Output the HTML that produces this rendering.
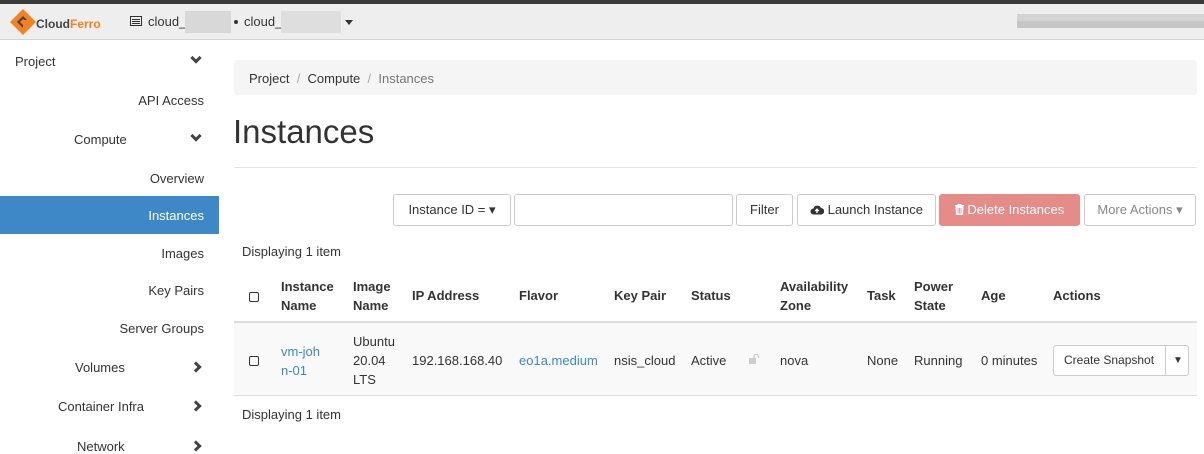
<!DOCTYPE html>
<html><head><meta charset="utf-8"><style>
*{box-sizing:border-box;margin:0;padding:0}
body{width:1204px;height:453px;overflow:hidden;background:#fff;font-family:"Liberation Sans",sans-serif;font-size:13px;color:#333;position:relative}
.a{position:absolute;white-space:nowrap}
.top{position:absolute;left:0;top:0;width:1204px;height:4px;background:#3a3a3a}
.hdr{position:absolute;left:0;top:4px;width:1204px;height:36px;background:#eee;border-bottom:1px solid #d4d4d4}
.side{position:absolute;right:1000px;text-align:right;font-size:13px;color:#333}
.chev{position:absolute;left:192px;width:8px;height:8px;border-right:3px solid #444;border-bottom:3px solid #444}
.btn{position:absolute;top:194px;height:32px;border:1px solid #ccc;border-radius:3px;background:#fff;font-size:13px;line-height:30px;text-align:center;color:#333}
.th{position:absolute;font-weight:bold;line-height:19px}
.td{position:absolute;line-height:19px}
.cb{position:absolute;width:10px;height:10px;border:1px solid #333;border-radius:2px}
.blur{position:absolute;background:#ccc}
</style></head><body>
<div class="top"></div>
<div class="hdr"></div>
<svg class="a" style="left:9px;top:8px" width="28" height="28" viewBox="0 0 28 28"><path d="M14 1 L27 14 L14 27 L1 14Z" fill="#f58220"/><path d="M8 14 L14 8 L18 12 L15 12 L14 11 L11 14 L14 17 L14 20 Z" fill="#444"/></svg>
<div class="a" style="left:36px;top:17px;font-size:12px;font-weight:bold;color:#444">Cloud<span style="color:#f58220">Ferro</span></div>
<svg class="a" style="left:130px;top:16px" width="12" height="10"><rect x="0.5" y="0.5" width="11" height="9" fill="none" stroke="#333"/><rect x="2" y="3" width="8" height="1" fill="#333"/><rect x="2" y="5" width="8" height="1" fill="#333"/><rect x="2" y="7" width="8" height="1" fill="#333"/></svg>
<div class="a" style="left:148px;top:14px;font-size:13px">cloud_</div>
<div class="blur" style="left:185px;top:11px;width:46px;height:22px;background:#d8d8d8"></div>
<div class="a" style="left:234px;top:20px;width:4px;height:4px;border-radius:2px;background:#333"></div>
<div class="a" style="left:244px;top:14px;font-size:13px">cloud_</div>
<div class="blur" style="left:281px;top:11px;width:60px;height:22px;background:#dedede"></div>
<div class="a" style="left:345px;top:20px;border-left:4px solid transparent;border-right:4px solid transparent;border-top:5px solid #333"></div>
<div class="blur" style="left:1017px;top:14px;width:187px;height:7px;background:#d4d4d4"></div>
<div class="blur" style="left:1017px;top:21px;width:187px;height:7px;background:#c6c6c6"></div>

<div class="a" style="left:15px;top:54px">Project</div><div class="chev" style="top:54px;transform:rotate(45deg)"></div>
<div class="side" style="top:93px">API Access</div>
<div class="a" style="left:74px;top:132px">Compute</div><div class="chev" style="top:132px;transform:rotate(45deg)"></div>
<div class="side" style="top:171px">Overview</div>
<div class="a" style="left:0;top:196px;width:219px;height:38px;background:#3f88c8"></div>
<div class="side" style="top:208px;color:#fff">Instances</div>
<div class="side" style="top:246px">Images</div>
<div class="side" style="top:283px">Key Pairs</div>
<div class="side" style="top:321px">Server Groups</div>
<div class="a" style="left:75px;top:360px">Volumes</div><div class="chev" style="top:363px;left:192px;transform:rotate(-45deg)"></div>
<div class="a" style="left:58px;top:399px">Container Infra</div><div class="chev" style="top:402px;left:192px;transform:rotate(-45deg)"></div>
<div class="a" style="left:77px;top:439px">Network</div><div class="chev" style="top:442px;left:192px;transform:rotate(-45deg)"></div>

<div class="a" style="left:234px;top:60px;width:963px;height:35px;background:#f5f5f5;border-radius:3px"></div>
<div class="a" style="left:249px;top:71px">Project <span style="color:#aaa">&nbsp;/&nbsp;</span> Compute <span style="color:#aaa">&nbsp;/&nbsp;</span> <span style="color:#777">Instances</span></div>
<div class="a" style="left:233px;top:113px;font-size:33px;color:#333">Instances</div>
<div class="a" style="left:234px;top:167px;width:963px;height:1px;background:#e5e5e5"></div>

<div class="btn" style="left:393px;width:118px">Instance ID = ▾</div>
<div class="btn" style="left:514px;width:219px"></div>
<div class="btn" style="left:736px;width:57px">Filter</div>
<div class="btn" style="left:797px;width:139px"><svg width="14" height="11" viewBox="0 0 14 11" style="vertical-align:-1px"><path d="M3.5 10.5 A3 3 0 0 1 3.5 4.5 A4 4 0 0 1 11 4 A3.2 3.2 0 0 1 11 10.5Z" fill="#333"/><path d="M7 9 V5.5 M5.3 7 L7 5.3 L8.7 7" stroke="#fff" stroke-width="1.4" fill="none"/></svg> Launch Instance</div>
<div class="btn" style="left:939px;width:141px;background:#e58b88;border-color:#e58b88;color:#fff"><svg width="9" height="11" viewBox="0 0 9 11" style="vertical-align:-1px"><path d="M0 1.5 H9 M3 1.5 V0.5 H6 V1.5 M1 2.5 H8 L7.5 11 H1.5Z" stroke="#fff" fill="#fff" stroke-width="1"/><path d="M3 4 V9.5 M4.5 4 V9.5 M6 4 V9.5" stroke="#e58b88" stroke-width="0.8"/></svg> Delete Instances</div>
<div class="btn" style="left:1084px;width:112px;color:#888">More Actions ▾</div>

<div class="a" style="left:242px;top:244px">Displaying 1 item</div>
<div class="cb" style="left:249px;top:292px"></div>
<div class="th" style="left:281px;top:277px">Instance<br>Name</div>
<div class="th" style="left:353px;top:277px">Image<br>Name</div>
<div class="th" style="left:412px;top:286px">IP Address</div>
<div class="th" style="left:519px;top:286px">Flavor</div>
<div class="th" style="left:614px;top:286px">Key Pair</div>
<div class="th" style="left:691px;top:286px">Status</div>
<div class="th" style="left:780px;top:277px">Availability<br>Zone</div>
<div class="th" style="left:867px;top:286px">Task</div>
<div class="th" style="left:914px;top:277px">Power<br>State</div>
<div class="th" style="left:981px;top:286px">Age</div>
<div class="th" style="left:1053px;top:286px">Actions</div>
<div class="a" style="left:234px;top:321px;width:963px;height:2px;background:#ddd"></div>
<div class="a" style="left:234px;top:323px;width:963px;height:73px;background:#f9f9f9;border-bottom:1px solid #ddd"></div>
<div class="cb" style="left:249px;top:356px"></div>
<div class="td" style="left:281px;top:342px;color:#3f88c8">vm-joh<br>n-01</div>
<div class="td" style="left:353px;top:332px">Ubuntu<br>20.04<br>LTS</div>
<div class="td" style="left:412px;top:351px">192.168.168.40</div>
<div class="td" style="left:519px;top:351px;color:#3f88c8">eo1a.medium</div>
<div class="td" style="left:614px;top:351px">nsis_cloud</div>
<div class="td" style="left:691px;top:351px">Active</div>
<svg class="a" style="left:749px;top:354px" width="11" height="10" viewBox="0 0 11 10"><rect x="0" y="4" width="7" height="6" fill="#ccc"/><path d="M5 4 V2.5 A2.2 2.2 0 0 1 9.5 2.5 V4" stroke="#ccc" stroke-width="1.3" fill="none"/></svg>
<div class="td" style="left:780px;top:351px">nova</div>
<div class="td" style="left:867px;top:351px">None</div>
<div class="td" style="left:914px;top:351px">Running</div>
<div class="td" style="left:981px;top:351px">0 minutes</div>
<div class="btn" style="left:1053px;top:345px;width:136px;height:31px;line-height:29px;text-align:left;padding-left:10px;font-size:12px">Create Snapshot<span style="position:absolute;left:111px;top:0;height:29px;border-left:1px solid #ccc;padding-left:7px;font-size:10px">▼</span></div>
<div class="a" style="left:242px;top:407px">Displaying 1 item</div>
</body></html>
